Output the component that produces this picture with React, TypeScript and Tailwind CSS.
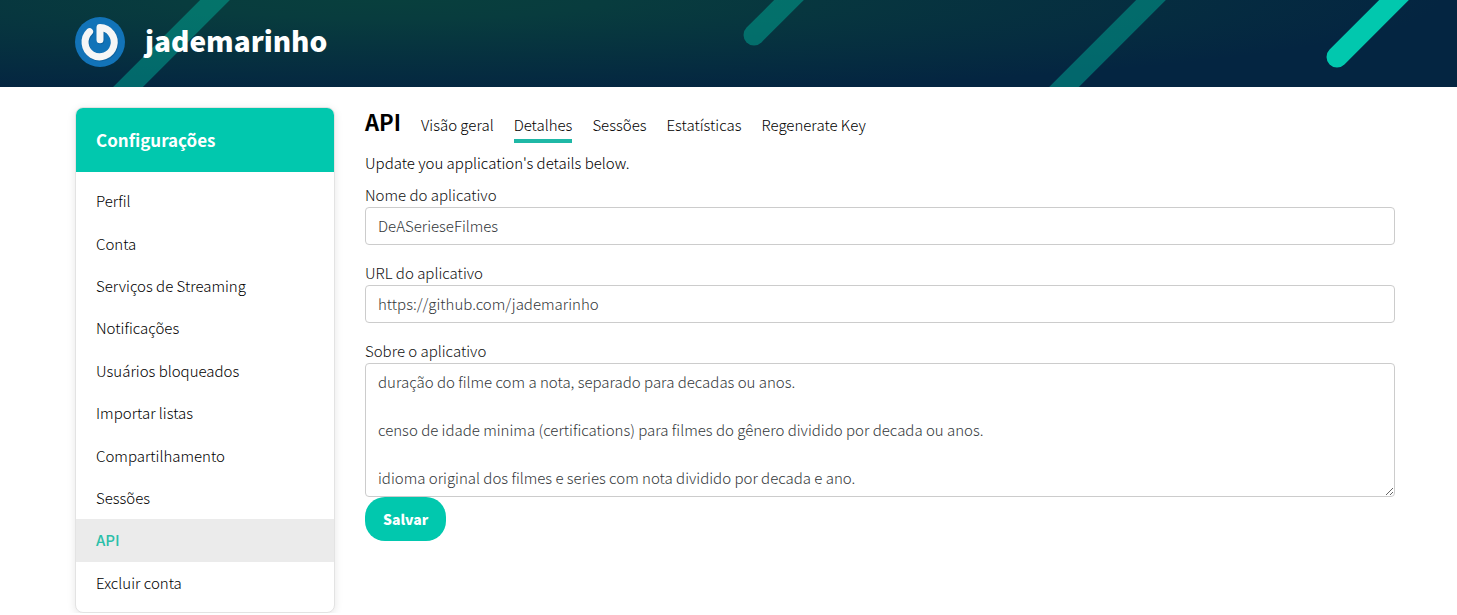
import { useState } from "react";

const menu = [
  "Perfil",
  "Conta",
  "Serviços de Streaming",
  "Notificações",
  "Usuários bloqueados",
  "Importar listas",
  "Compartilhamento",
  "Sessões",
  "API",
  "Excluir conta",
];

const tabs = ["Visão geral", "Detalhes", "Sessões", "Estatísticas", "Regenerate Key"];

const aboutText = [
  "duração do filme com a nota, separado para decadas ou anos.",
  "",
  "censo de idade minima (certifications) para filmes do gênero dividido por decada ou anos.",
  "",
  "idioma original dos filmes e series com nota dividido por decada e ano.",
].join("\n");

function Avatar() {
  return (
    <svg viewBox="0 0 50 50" className="size-[50px] shrink-0" role="img" aria-label="Avatar">
      <circle cx="25" cy="25" r="25" fill="#1273b8" />
      <g fill="none" strokeLinecap="round" strokeLinejoin="round" strokeWidth="7">
        <path
          d="M14.6 14.6 A14.6 14.6 0 1 0 25 10.6 V22.8"
          stroke="#0a4f86"
          strokeOpacity="0.45"
          transform="translate(0.8 1)"
        />
        <path d="M14.6 14.6 A14.6 14.6 0 1 0 25 10.6 V22.8" stroke="#f6f6f6" />
      </g>
    </svg>
  );
}

function Stripes() {
  return (
    <svg
      viewBox="0 0 1457 87"
      preserveAspectRatio="xMidYMin slice"
      className="absolute inset-0 size-full"
      aria-hidden="true"
    >
      <g strokeWidth="21" strokeLinecap="round" fill="none">
        <path d="M245 -30 L98 117" stroke="#01b4a0" strokeOpacity="0.46" />
        <path d="M819 -30 L754 35" stroke="#01b4a0" strokeOpacity="0.46" />
        <path d="M1181 -30 L1036 115" stroke="#01b4a0" strokeOpacity="0.46" />
        <path d="M1424 -30 L1337 57" stroke="#01c8ae" />
      </g>
    </svg>
  );
}

function Header() {
  return (
    <header className="relative overflow-hidden bg-[#042541] bg-[radial-gradient(ellipse_72%_110%_at_27%_0%,#083f3d_0%,#083c3e_20%,#042541_100%)]">
      <Stripes />
      <div className="relative flex items-center gap-5 pt-[17px] pr-[62px] pb-5 pl-[75px]">
        <Avatar />
        <h1 className="pb-1 text-[28px] leading-[46px] font-black text-white">jademarinho</h1>
      </div>
    </header>
  );
}

function Sidebar() {
  return (
    <nav
      aria-label="Configurações"
      className="w-[260px] shrink-0 overflow-hidden rounded-lg border border-[#e3e3e3] bg-white shadow-[0_2px_8px_rgba(0,0,0,0.1)]"
    >
      <h2 className="bg-[#01c8ae] px-5 py-5 text-[17px] leading-6 font-bold text-white">
        Configurações
      </h2>
      <ul className="grid min-h-[440px] auto-rows-fr py-2 text-[15px]">
        {menu.map((item) => (
          <li key={item} className="grid">
            <a
              href="#"
              aria-current={item === "API" ? "page" : undefined}
              className={
                item === "API"
                  ? "flex items-center bg-[#ebebeb] px-5 font-medium text-[#2bbfa9]"
                  : "flex items-center px-5 text-black"
              }
            >
              {item}
            </a>
          </li>
        ))}
      </ul>
    </nav>
  );
}

const fieldClass =
  "block w-full rounded border border-[#cccccc] bg-white px-3 py-[6px] text-[15px] leading-6 text-[#33373a] outline-none";

export default function App() {
  const [name, setName] = useState("DeASerieseFilmes");
  const [url, setUrl] = useState("https://github.com/jademarinho");
  const [about, setAbout] = useState(aboutText);

  return (
    <div className="bg-white font-['Noto_Sans_CJK_SC',sans-serif] text-[15px] leading-6 font-light text-black">
      <Header />
      <main className="flex items-start gap-[30px] pt-5 pr-[62px] pl-[75px]">
        <Sidebar />
        <section className="min-w-0 flex-1">
          <div className="flex items-baseline gap-5 pb-2">
            <h2 className="text-[22px] leading-7 font-bold text-black">API</h2>
            <nav aria-label="API" className="flex gap-5">
              {tabs.map((tab) => (
                <a
                  key={tab}
                  href="#"
                  className={
                    tab === "Detalhes"
                      ? "border-b-4 border-[#1fb8a6] pb-0.5"
                      : "border-b-4 border-transparent pb-0.5"
                  }
                >
                  {tab}
                </a>
              ))}
            </nav>
          </div>
          <p className="pb-2">Update you application's details below.</p>
          <form onSubmit={(event) => event.preventDefault()}>
            <div className="pb-4">
              <label htmlFor="app-name" className="block text-[#111]">
                Nome do aplicativo
              </label>
              <input
                id="app-name"
                type="text"
                value={name}
                onChange={(event) => setName(event.target.value)}
                className={fieldClass}
              />
            </div>
            <div className="pb-4">
              <label htmlFor="app-url" className="block text-[#111]">
                URL do aplicativo
              </label>
              <input
                id="app-url"
                type="text"
                value={url}
                onChange={(event) => setUrl(event.target.value)}
                className={fieldClass}
              />
            </div>
            <label htmlFor="app-about" className="block text-[#111]">
              Sobre o aplicativo
            </label>
            <textarea
              id="app-about"
              rows={5}
              value={about}
              onChange={(event) => setAbout(event.target.value)}
              className={fieldClass}
            />
            <button
              type="submit"
              className="rounded-[20px] bg-[#01c8ae] px-[18px] py-[10px] text-[14px] leading-6 font-black text-white"
            >
              Salvar
            </button>
          </form>
        </section>
      </main>
    </div>
  );
}
